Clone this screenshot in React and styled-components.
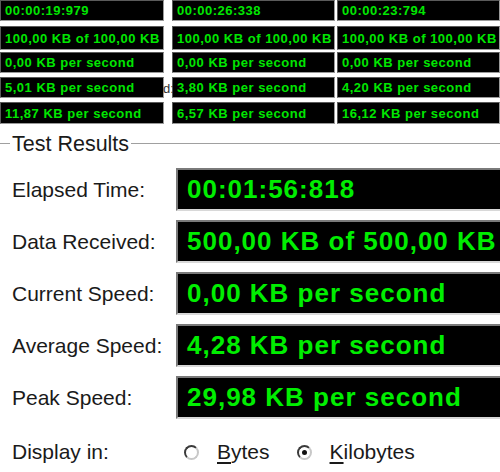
import React from "react";
import styled, { createGlobalStyle } from "styled-components";

const GlobalStyle = createGlobalStyle`
    body {
        margin: 0;
        background: #ffffff;
        overflow: hidden;
        font-family: "Liberation Sans", Arial, sans-serif;
    }
`
const Page = styled.div`
    width: 500px;
    height: 472px;
    overflow: hidden;
    background: #ffffff;
`
const TopStrip = styled.div`
    display: flex;
    height: 125px;
`
const Column = styled.div`
    display: flex;
    flex-direction: column;
    width: ${p => p.$width}px;
    margin-left: ${p => p.$offset || 0}px;
    flex-shrink: 0;
`
const SmallDisplay = styled.div`
    position: relative;
    box-sizing: border-box;
    height: ${p => p.$height}px;
    margin-top: ${p => p.$top}px;
    background: #000;
    border-top: 1px solid #5a5a5a;
    border-left: 1px solid #5a5a5a;
    border-right: 1px solid #9a9a9a;
    border-bottom: 1px solid #9a9a9a;
    color: #00e600;
    font-weight: bold;
    font-size: 13px;
    letter-spacing: 0.5px;
    padding-left: 4px;
    display: flex;
    align-items: center;
    white-space: nowrap;
    overflow: hidden;
    ${p => p.$cutLabel && `
        overflow: visible;
        &::before {
            content: "d:";
            position: absolute;
            left: -10px;
            top: 3px;
            color: #333;
            font-weight: normal;
            font-size: 13px;
            letter-spacing: 0;
        }
    `}
`
const GroupHeader = styled.div`
    display: flex;
    align-items: center;
    height: 22px;
    margin-top: 8px;
`
const EtchedLine = styled.div`
    height: 1px;
    border-top: 1px solid #a0a0a0;
    border-bottom: 1px solid #ffffff;
    width: ${p => (p.$grow ? "auto" : `${p.$width}px`)};
    flex: ${p => (p.$grow ? 1 : "none")};
`
const GroupTitle = styled.span`
    font-size: 21.5px;
    color: #1a1a1a;
    padding: 0 2px;
    line-height: 22px;
`
const Results = styled.div`
    display: flex;
    flex-direction: column;
    gap: 9px;
    margin-top: 13px;
`
const ResultRow = styled.div`
    display: flex;
    align-items: center;
    height: 43px;
`
const Label = styled.div`
    width: 164px;
    padding-left: 12px;
    font-size: 21px;
    color: #1a1a1a;
    flex-shrink: 0;
    white-space: nowrap;
`
const BigDisplay = styled.div`
    box-sizing: border-box;
    height: 43px;
    width: 340px;
    flex-shrink: 0;
    background: #000;
    border-top: 2px solid #7a7a7a;
    border-left: 2px solid #7a7a7a;
    border-bottom: 2px solid #d8d8d8;
    border-right: 2px solid #d8d8d8;
    padding-left: 9px;
    display: flex;
    align-items: center;
    color: #00ee00;
    font-weight: bold;
    font-size: 26px;
    letter-spacing: 1px;
    white-space: nowrap;
    overflow: hidden;
`
const DisplayRow = styled.div`
    display: flex;
    align-items: center;
    height: 28px;
    margin-top: 19px;
`
const RadioGroup = styled.label`
    display: flex;
    align-items: center;
    margin-left: ${p => p.$offset}px;
    font-size: 21px;
    color: #1a1a1a;
    u {
        text-decoration: underline;
        text-underline-offset: 3px;
    }
`
const RadioCircle = styled.span`
    box-sizing: border-box;
    width: 15px;
    height: 15px;
    border-radius: 50%;
    border-top: 2px solid #3a3a3a;
    border-left: 2px solid #3a3a3a;
    border-right: 2px solid #c8c8c8;
    border-bottom: 2px solid #c8c8c8;
    background: #fff;
    display: inline-flex;
    align-items: center;
    justify-content: center;
    margin-right: 18px;
    &::after {
        content: "";
        width: 5px;
        height: 5px;
        border-radius: 50%;
        background: ${p => (p.$checked ? "#111" : "transparent")};
    }
`

const rowGeometry = [
    { top: 0, height: 21 },
    { top: 5, height: 24 },
    { top: 2, height: 21 },
    { top: 4, height: 21 },
    { top: 4, height: 22 },
]

const columns = [
    { width: 164, offset: 0, values: ["00:00:19:979", "100,00 KB of 100,00 KB", "0,00 KB per second", "5,01 KB per second", "11,87 KB per second"] },
    { width: 163, offset: 8, values: ["00:00:26:338", "100,00 KB of 100,00 KB", "0,00 KB per second", "3,80 KB per second", "6,57 KB per second"] },
    { width: 163, offset: 2, values: ["00:00:23:794", "100,00 KB of 100,00 KB", "0,00 KB per second", "4,20 KB per second", "16,12 KB per second"] },
]

const results = [
    ["Elapsed Time:", "00:01:56:818"],
    ["Data Received:", "500,00 KB of 500,00 KB"],
    ["Current Speed:", "0,00 KB per second"],
    ["Average Speed:", "4,28 KB per second"],
    ["Peak Speed:", "29,98 KB per second"],
]

export default function App() {
    return (
        <Page>
            <GlobalStyle />
            <TopStrip>
                {columns.map((col, c) => (
                    <Column key={c} $width={col.width} $offset={col.offset}>
                        {col.values.map((v, i) => (
                            <SmallDisplay
                                key={i}
                                $top={rowGeometry[i].top}
                                $height={rowGeometry[i].height}
                                $cutLabel={c === 1 && i === 3}
                            >
                                {v}
                            </SmallDisplay>
                        ))}
                    </Column>
                ))}
            </TopStrip>
            <GroupHeader>
                <EtchedLine $width={10} />
                <GroupTitle>Test Results</GroupTitle>
                <EtchedLine $grow />
            </GroupHeader>
            <Results>
                {results.map(([label, value]) => (
                    <ResultRow key={label}>
                        <Label>{label}</Label>
                        <BigDisplay>{value}</BigDisplay>
                    </ResultRow>
                ))}
            </Results>
            <DisplayRow>
                <Label>Display in:</Label>
                <RadioGroup $offset={8}>
                    <RadioCircle />
                    <span><u>B</u>ytes</span>
                </RadioGroup>
                <RadioGroup $offset={27}>
                    <RadioCircle $checked />
                    <span><u>K</u>ilobytes</span>
                </RadioGroup>
            </DisplayRow>
        </Page>
    );
}
